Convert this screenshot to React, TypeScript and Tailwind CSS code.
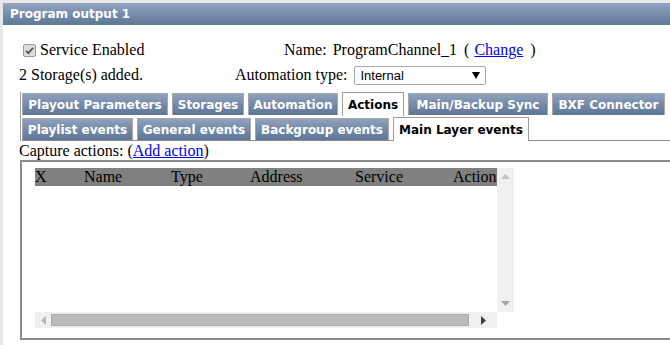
import React from "react";

const serif = "font-['Liberation_Serif','Times_New_Roman',serif]";
const verdana = "font-['DejaVu_Sans',Verdana,sans-serif]";

type Tab = { label: string; width: string; active?: boolean };

const mainTabs: Tab[] = [
  { label: "Playout Parameters", width: "w-[146px]" },
  { label: "Storages", width: "w-[72px]" },
  { label: "Automation", width: "w-[90px]" },
  { label: "Actions", width: "w-[62px]", active: true },
  { label: "Main/Backup Sync", width: "w-[140px]" },
  { label: "BXF Connector", width: "w-[113px]" },
];

const subTabs: Tab[] = [
  { label: "Playlist events", width: "w-[111px]" },
  { label: "General events", width: "w-[114px]" },
  { label: "Backgroup events", width: "w-[134px]" },
  { label: "Main Layer events", width: "w-[136px]", active: true },
];

const columns = [
  { label: "X", width: "w-[49px]" },
  { label: "Name", width: "w-[87px]" },
  { label: "Type", width: "w-[79px]" },
  { label: "Address", width: "w-[105px]" },
  { label: "Service", width: "w-[98px]" },
  { label: "Action", width: "w-[44px]" },
];

function TabButton({ tab }: { tab: Tab }) {
  return (
    <div
      className={`${tab.width} shrink-0 flex items-center justify-center border border-b-0 text-[12px] font-bold ${verdana} ${
        tab.active
          ? "h-[24px] bg-white border-[#9c9c9c] text-black relative z-10"
          : "h-[22px] mt-[1px] border-[#a8a8a8] bg-gradient-to-b from-[#8fa1bc] to-[#5d7596] text-white"
      }`}
    >
      {tab.label}
    </div>
  );
}

function CheckBox() {
  return (
    <svg width="13" height="13" viewBox="0 0 13 13">
      <rect x="0.5" y="0.5" width="12" height="12" rx="1.5" fill="#dcdcdc" stroke="#9a9a9a" />
      <path d="M3 6.8l2.4 2.4L10 3.8" fill="none" stroke="#555" strokeWidth="1.8" />
    </svg>
  );
}

export default function App() {
  return (
    <div className="w-[670px] h-[345px] overflow-hidden bg-[#e8e8e8] pl-[3px] pt-[3px]">
      <div className="h-full bg-white">
        {/* Title */}
        <div className={`h-[22px] flex items-center pl-[7px] bg-gradient-to-b from-[#93a5bf] to-[#5e7697] text-white text-[12px] font-bold ${verdana}`}>
          Program output 1
        </div>

        {/* Service / name row */}
        <div className={`${serif} text-[16px] text-black`}>
          <div className="mt-[15px] h-[20px] flex items-center">
            <div className="w-[281px] flex items-center pl-[20px] gap-[4px]">
              <CheckBox />
              <span>Service Enabled</span>
            </div>
            <span>Name:</span>
            <span className="ml-[6px]">ProgramChannel_1</span>
            <span className="ml-[7px]">(</span>
            <a className="ml-[5px] text-[#0000ee] underline">Change</a>
            <span className="ml-[7px]">)</span>
          </div>

          <div className="mt-[5px] h-[20px] flex items-center">
            <div className="w-[232px] pl-[16px]">2 Storage(s) added.</div>
            <span>Automation type:</span>
            <div className="ml-[7px] mt-[1px] w-[132px] h-[19px] border border-[#a9a9a9] rounded-[2px] flex items-center justify-between pl-[5px] pr-[5px] font-['Liberation_Sans',Arial,sans-serif] text-[13px]">
              <span>Internal</span>
              <svg width="8" height="7" viewBox="0 0 8 7">
                <path d="M0 0h8L4 7z" fill="#000" />
              </svg>
            </div>
          </div>
        </div>

        {/* Tabs */}
        <div className="mt-[7px] ml-[17px] border-l border-[#a0a0a0] pl-[1px]">
          <div className="flex items-start gap-[4px] h-[25px]">
            {mainTabs.map((t) => (
              <TabButton key={t.label} tab={t} />
            ))}
          </div>
          <div className="flex items-start gap-[4px] h-[24px] border-b border-[#8c8c8c]">
            {subTabs.map((t) => (
              <TabButton key={t.label} tab={t} />
            ))}
          </div>
        </div>

        {/* Capture actions */}
        <div className={`${serif} text-[16px] text-black ml-[16px] h-[19px] leading-[20px]`}>
          Capture actions: (<a className="text-[#0000ee] underline">Add action</a>)
        </div>

        <div className="ml-[17px] w-[680px] h-[180px] border-2 border-[#8c8c8c] pl-[13px] pt-[6px]">
          <div className="flex">
            <div className="w-[462px] h-[144px] overflow-hidden">
              <div className={`flex h-[18px] bg-[#808080] ${serif} text-[16px] leading-[18px] text-black whitespace-nowrap`}>
                {columns.map((c) => (
                  <div key={c.label} className={`${c.width} shrink-0`}>
                    {c.label}
                  </div>
                ))}
              </div>
            </div>
            <div className="w-[17px] h-[144px] bg-[#f0f0f0] flex flex-col items-center justify-between py-[6px]">
              <svg width="9" height="5" viewBox="0 0 9 5">
                <path d="M0 5L4.5 0L9 5z" fill="#c2c2c2" />
              </svg>
              <svg width="9" height="5" viewBox="0 0 9 5">
                <path d="M0 0h9L4.5 5z" fill="#a3a3a3" />
              </svg>
            </div>
          </div>
          <div className="flex">
            <div className="w-[462px] h-[16px] bg-[#f0f0f0] flex items-center">
              <div className="w-[16px] flex justify-center">
                <svg width="5" height="9" viewBox="0 0 5 9">
                  <path d="M5 0v9L0 4.5z" fill="#b5b5b5" />
                </svg>
              </div>
              <div className="w-[418px] h-[12px] bg-[#bcbcbc] border border-[#a6a6a6]" />
              <div className="flex-1 flex justify-center">
                <svg width="5" height="9" viewBox="0 0 5 9">
                  <path d="M0 0v9L5 4.5z" fill="#404040" />
                </svg>
              </div>
            </div>
          </div>
        </div>
      </div>
    </div>
  );
}
